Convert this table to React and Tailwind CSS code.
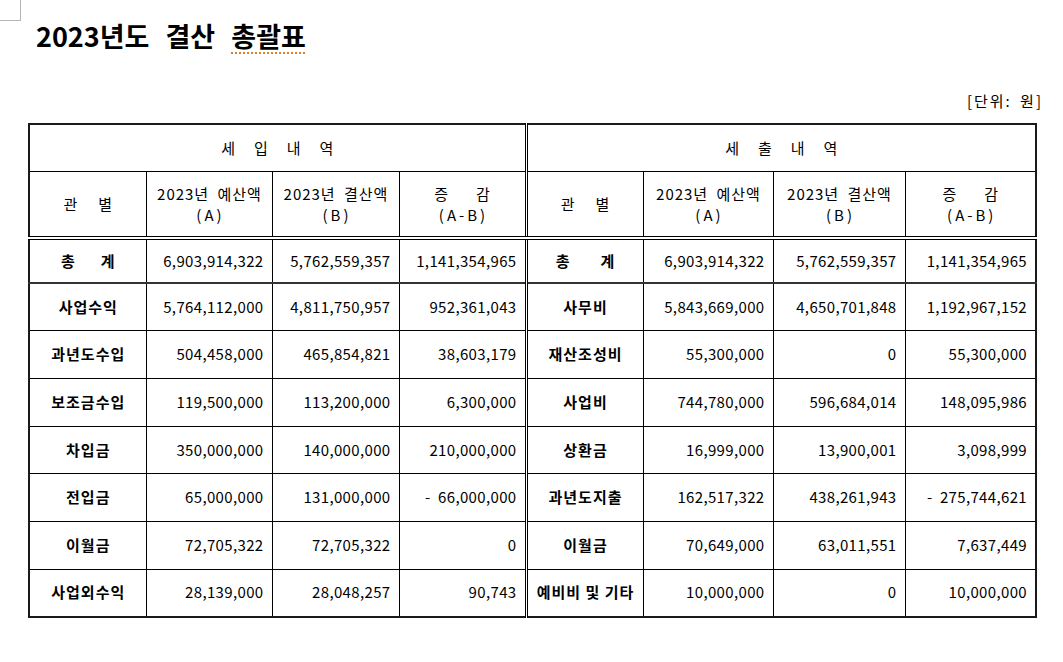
import React from 'react';

const income = [
    ['사업수익', '5,764,112,000', '4,811,750,957', '952,361,043'],
    ['과년도수입', '504,458,000', '465,854,821', '38,603,179'],
    ['보조금수입', '119,500,000', '113,200,000', '6,300,000'],
    ['차입금', '350,000,000', '140,000,000', '210,000,000'],
    ['전입금', '65,000,000', '131,000,000', '-  66,000,000'],
    ['이월금', '72,705,322', '72,705,322', '0'],
    ['사업외수익', '28,139,000', '28,048,257', '90,743'],
];

const spending = [
    ['사무비', '5,843,669,000', '4,650,701,848', '1,192,967,152'],
    ['재산조성비', '55,300,000', '0', '55,300,000'],
    ['사업비', '744,780,000', '596,684,014', '148,095,986'],
    ['상환금', '16,999,000', '13,900,001', '3,098,999'],
    ['과년도지출', '162,517,322', '438,261,943', '-  275,744,621'],
    ['이월금', '70,649,000', '63,011,551', '7,637,449'],
    ['예비비 및 기타', '10,000,000', '0', '10,000,000'],
];

// 글자 사이를 벌린 머리글 (관 별, 총 계 ...)
const Spread = ({ chars, gap = 'gap-6' }) => (
    <span className={`inline-flex justify-center ${gap}`}>
        {chars.map((c) => <span key={c}>{c}</span>)}
    </span>
);

const HeadCell = ({ top, bottom }) => (
    <th className="border border-black font-normal text-center leading-[21px]">
        <div className="tracking-[1px] pl-[1px] [word-spacing:4px]">{top}</div>
        <div className="tracking-[3px] pl-[3px]">{bottom}</div>
    </th>
);

const num = 'border border-black text-right pr-2 whitespace-pre tracking-[0.35px]';
const label = 'border border-black text-center font-bold text-[15px] tracking-[1px] pl-[1px]';
const mid = 'border-l-[3px] border-l-black border-double';

export default function App() {
    return (
        <div className="relative w-[1063px] h-[662px] bg-white text-black font-['Noto_Sans_CJK_KR','Noto_Sans',sans-serif] overflow-hidden">
            {/* 편집기 여백 표시 */}
            <div className="absolute left-0 top-0 w-[21px] h-[21px] border-r border-b border-[#b5b5b5]"></div>

            <h1 className="pl-[36px] pt-[17px] text-[27px] font-bold leading-[38px] [word-spacing:10px]">
                2023년도 결산 <span className="underline decoration-dotted decoration-[#d9822b] decoration-[1.5px] underline-offset-[5px]">총괄표</span>
            </h1>

            <div className="mt-[36px] pr-[20px] text-right text-[15px] leading-[20px] tracking-[2px] [word-spacing:3px]">[단위: 원]</div>

            <table className="mt-[12px] ml-[28px] w-[1007px] table-fixed border-collapse border-2 border-[#1a1a1a] text-[15px]">
                <colgroup>
                    <col className="w-[117px]" />
                    <col className="w-[126px]" />
                    <col className="w-[127px]" />
                    <col className="w-[127px]" />
                    <col className="w-[117px]" />
                    <col className="w-[130px]" />
                    <col className="w-[132px]" />
                    <col className="w-[131px]" />
                </colgroup>
                <thead>
                    <tr className="h-[47px]">
                        <th colSpan={4} className="border border-black font-normal">
                            <Spread chars={['세', '입', '내', '역']} gap="gap-[19px]" />
                        </th>
                        <th colSpan={4} className={`border border-black font-normal ${mid}`}>
                            <Spread chars={['세', '출', '내', '역']} gap="gap-[19px]" />
                        </th>
                    </tr>
                    <tr className="h-[67px] border-b-4 border-double border-black">
                        <th className="border border-black font-normal">
                            <Spread chars={['관', '별']} gap="gap-[21px]" />
                        </th>
                        <HeadCell top="2023년 예산액" bottom="(A)" />
                        <HeadCell top="2023년 결산액" bottom="(B)" />
                        <HeadCell top={<Spread chars={['증', '감']} gap="gap-[27px]" />} bottom="(A-B)" />
                        <th className={`border border-black font-normal ${mid}`}>
                            <Spread chars={['관', '별']} gap="gap-[21px]" />
                        </th>
                        <HeadCell top="2023년 예산액" bottom="(A)" />
                        <HeadCell top="2023년 결산액" bottom="(B)" />
                        <HeadCell top={<Spread chars={['증', '감']} gap="gap-[27px]" />} bottom="(A-B)" />
                    </tr>
                </thead>
                <tbody>
                    <tr className="h-[45px] border-b-2 border-[#333]">
                        <td className={label}><Spread chars={['총', '계']} gap="gap-[25px]" /></td>
                        <td className={num}>6,903,914,322</td>
                        <td className={num}>5,762,559,357</td>
                        <td className={num}>1,141,354,965</td>
                        <td className={`${label} ${mid}`}><Spread chars={['총', '계']} gap="gap-[30px]" /></td>
                        <td className={num}>6,903,914,322</td>
                        <td className={num}>5,762,559,357</td>
                        <td className={num}>1,141,354,965</td>
                    </tr>
                    {income.map((row, i) => {
                        const out = spending[i];
                        return (
                            <tr key={row[0]} className="h-[47.7px]">
                                <td className={label}>{row[0]}</td>
                                <td className={num}>{row[1]}</td>
                                <td className={num}>{row[2]}</td>
                                <td className={num}>{row[3]}</td>
                                <td className={`${label} ${mid} ${out[0].length > 5 ? 'tracking-[1.5px] whitespace-nowrap' : ''}`}>{out[0]}</td>
                                <td className={num}>{out[1]}</td>
                                <td className={num}>{out[2]}</td>
                                <td className={num}>{out[3]}</td>
                            </tr>
                        );
                    })}
                </tbody>
            </table>
        </div>
    );
}
